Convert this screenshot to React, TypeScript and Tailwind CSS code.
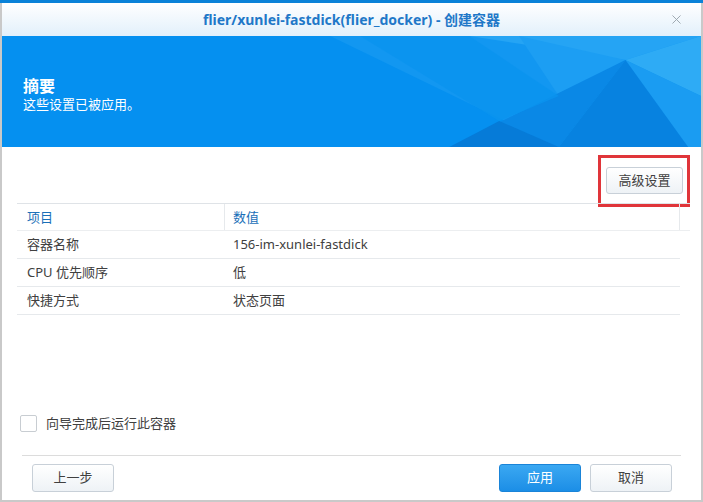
import React from 'react';
import { X } from 'lucide-react';

const font = { fontFamily: '"Noto Sans", "Noto Sans CJK SC", sans-serif' };

const rows = [
  ['容器名称', '156-im-xunlei-fastdick'],
  ['CPU 优先顺序', '低'],
  ['快捷方式', '状态页面'],
];

function Banner() {
  return (
    <svg className="absolute inset-0 h-full w-full" viewBox="0 0 703 111" preserveAspectRatio="none">
      <rect width="703" height="111" fill="#0590f0" />
      <polygon points="330,0 703,0 703,111 560,111" fill="#1297f1" />
      <polygon points="470,0 627,24 703,0" fill="#25a4f4" />
      <polygon points="520,0 627,24 560,60" fill="#1c9ef3" />
      <polygon points="627,24 703,0 703,60" fill="#2eabf5" />
      <polygon points="627,24 703,60 703,111 690,111" fill="#1a9cf2" />
      <polygon points="627,24 450,111 560,111" fill="#0a88e6" />
      <polygon points="627,24 560,111 690,111" fill="#0782e0" />
      <polygon points="500,85 450,111 560,111" fill="#067bd8" />
      <polygon points="360,0 470,0 560,60 500,85" fill="#0a93ef" opacity="0.8" />
    </svg>
  );
}

function Btn({ children, primary, className = '' }: { children: React.ReactNode; primary?: boolean; className?: string }) {
  return (
    <button
      className={`h-[28px] w-[82px] rounded-[3px] border text-[13px] ${
        primary
          ? 'border-[#1a84d8] bg-gradient-to-b from-[#3aa8f2] to-[#1b8ee6] text-white'
          : 'border-[#c8d0d8] bg-gradient-to-b from-white to-[#eef2f6] text-[#404040]'
      } ${className}`}
    >
      {children}
    </button>
  );
}

export default function App() {
  return (
    <div className="relative flex h-[502px] w-[703px] flex-col overflow-hidden bg-white text-[#404040]" style={font}>
      <div className="h-[3px] bg-[#0a82d8]" />
      <div className="flex flex-1 flex-col border-x-2 border-b-2 border-[#c9c9c9]">
        {/* title bar */}
        <div className="relative flex h-[33px] items-center justify-center bg-gradient-to-b from-white to-[#e2f0fb]">
          <span className="text-[14px] font-bold text-[#1f78c8]">flier/xunlei-fastdick(flier_docker) - 创建容器</span>
          <X className="absolute right-[17px] top-[9px] h-[15px] w-[15px] text-[#9aa4ad]" strokeWidth={1.5} />
        </div>

        {/* banner */}
        <div className="relative h-[111px]">
          <Banner />
          <div className="relative flex flex-col pl-[21px] pt-[41px] text-white">
            <span className="text-[16px] font-bold leading-[18px]">摘要</span>
            <span className="text-[13px] leading-[18px]">这些设置已被应用。</span>
          </div>
        </div>

        {/* body */}
        <div className="flex flex-1 flex-col px-[15px]">
          <div className="-mr-[4px] flex justify-end pt-[8px]">
            <div className="border-[3px] border-solid border-[#e0353a] pl-[5px] pr-[4px] pt-[9px] pb-[10px]">
              <Btn className="!h-[27px] !w-[77px]">高级设置</Btn>
            </div>
          </div>

          <div className="-mt-[4px] w-[673px] border-t border-[#dfe3e7] text-[13px]">
            <div className="flex h-[27px] items-center border-b border-[#eceef0] text-[#1a6fb8]">
              <div className="flex h-full w-[208px] items-center border-r border-[#e6e9ec] pl-[10px]">项目</div>
              <div className="flex h-full w-[455px] items-center border-r border-[#e6e9ec] pl-[8px]">数值</div>
            </div>
            {rows.map(([k, v]) => (
              <div key={k} className="flex h-[28px] w-[663px] items-center border-b border-[#e6e9ec]">
                <div className="w-[208px] pl-[10px]">{k}</div>
                <div className="pl-[8px]">{v}</div>
              </div>
            ))}
          </div>

          <div className="mt-auto flex items-center gap-[9px] pb-[22px] pl-[3px]">
            <div className="h-[17px] w-[17px] rounded-[2px] border border-[#c8cdd2] bg-white" />
            <span className="text-[13px]">向导完成后运行此容器</span>
          </div>

          <div className="mx-[5px] border-t border-[#dcdcdc]" />
          <div className="flex items-center pt-[8px] pb-[8px] pl-[15px] pr-[14px]">
            <Btn>上一步</Btn>
            <div className="flex-1" />
            <Btn primary>应用</Btn>
            <Btn className="ml-[9px]">取消</Btn>
          </div>
        </div>
      </div>
    </div>
  );
}
